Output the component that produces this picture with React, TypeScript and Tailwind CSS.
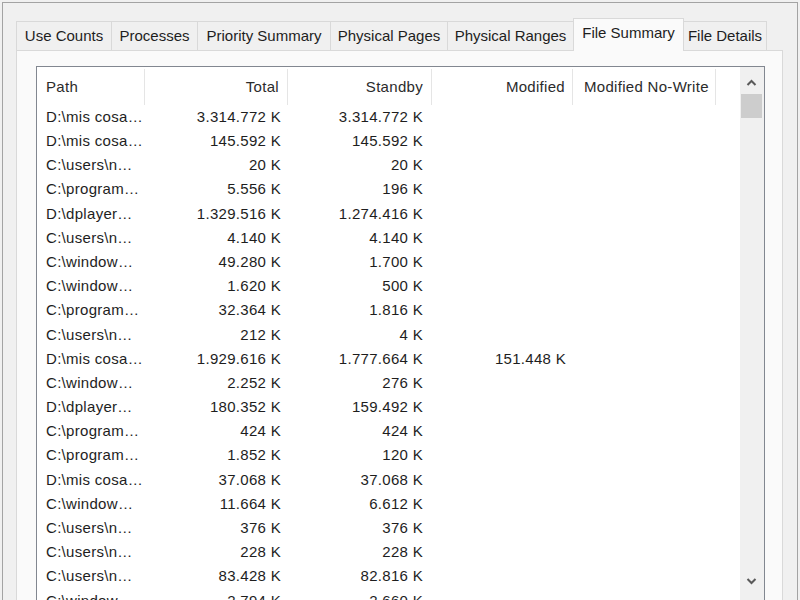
import React from 'react';

const tabs = [
  { label: 'Use Counts', w: 95 },
  { label: 'Processes', w: 86 },
  { label: 'Priority Summary', w: 133 },
  { label: 'Physical Pages', w: 117 },
  { label: 'Physical Ranges', w: 126 },
  { label: 'File Summary', w: 111, active: true },
  { label: 'File Details', w: 83 },
];

const rows: [string, string, string, string?][] = [
  ['D:\\mis cosa…', '3.314.772 K', '3.314.772 K'],
  ['D:\\mis cosa…', '145.592 K', '145.592 K'],
  ['C:\\users\\n…', '20 K', '20 K'],
  ['C:\\program…', '5.556 K', '196 K'],
  ['D:\\dplayer…', '1.329.516 K', '1.274.416 K'],
  ['C:\\users\\n…', '4.140 K', '4.140 K'],
  ['C:\\window…', '49.280 K', '1.700 K'],
  ['C:\\window…', '1.620 K', '500 K'],
  ['C:\\program…', '32.364 K', '1.816 K'],
  ['C:\\users\\n…', '212 K', '4 K'],
  ['D:\\mis cosa…', '1.929.616 K', '1.777.664 K', '151.448 K'],
  ['C:\\window…', '2.252 K', '276 K'],
  ['D:\\dplayer…', '180.352 K', '159.492 K'],
  ['C:\\program…', '424 K', '424 K'],
  ['C:\\program…', '1.852 K', '120 K'],
  ['D:\\mis cosa…', '37.068 K', '37.068 K'],
  ['C:\\window…', '11.664 K', '6.612 K'],
  ['C:\\users\\n…', '376 K', '376 K'],
  ['C:\\users\\n…', '228 K', '228 K'],
  ['C:\\users\\n…', '83.428 K', '82.816 K'],
  ['C:\\window…', '2.794 K', '2.660 K'],
];

function Chevron({ up }: { up?: boolean }) {
  return (
    <svg width="11" height="7" viewBox="0 0 11 7">
      <path
        d={up ? 'M1.5 6 L5.5 2 L9.5 6' : 'M1.5 1 L5.5 5 L9.5 1'}
        fill="none"
        stroke="#5a5a5a"
        strokeWidth="2"
      />
    </svg>
  );
}

export default function App() {
  return (
    <div className="w-[800px] h-[600px] overflow-hidden bg-[#f0f0f0] font-['Liberation_Sans',Arial,sans-serif] text-[15px] text-[#1e1e1e]">
      <div className="mt-[2px] mx-[2px] h-[598px] border-t border-l border-r border-[#a3a3a3] flex flex-col">
        {/* tabs */}
        <div className="flex items-end h-[47px] pl-[13px] relative z-10">
          {tabs.map((t, i) =>
            t.active ? (
              <div
                key={t.label}
                style={{ width: t.w }}
                className="h-[33px] -mb-px bg-[#fafafa] border border-b-0 border-[#d9d9d9] flex items-center justify-center pb-[3px] whitespace-nowrap"
              >
                {t.label}
              </div>
            ) : (
              <div
                key={t.label}
                style={{ width: t.w }}
                className={`h-[29px] bg-[#f0f0f0] border-t border-[#d9d9d9] flex items-center justify-center pt-[1px] whitespace-nowrap ${
                  i === tabs.length - 1 ? 'border-r' : ''
                } ${tabs[i - 1]?.active ? '' : 'border-l'}`}
              >
                {t.label}
              </div>
            )
          )}
        </div>

        {/* panel */}
        <div className="ml-[13px] w-[767px] flex-1 min-h-0 bg-[#fafafa] border border-b-0 border-[#d9d9d9] pt-[15px] pl-[19px] flex flex-col">
          <div className="w-[729px] flex-1 min-h-0 bg-white border border-b-0 border-[#828790] flex overflow-hidden">
            <div className="w-[703px] flex flex-col">
              <div className="flex h-[38px] shrink-0 text-[#2b2b2b] tracking-[0.3px] pt-[2px]">
                <div className="w-[108px] pl-[9px] flex items-center border-r border-[#e5e5e5]">Path</div>
                <div className="w-[143px] pr-[8px] flex items-center justify-end border-r border-[#e5e5e5]">Total</div>
                <div className="w-[144px] pr-[8px] flex items-center justify-end border-r border-[#e5e5e5]">Standby</div>
                <div className="w-[141px] pr-[7px] flex items-center justify-end border-r border-[#e5e5e5]">Modified</div>
                <div className="w-[143px] pl-[11px] flex items-center border-r border-[#e5e5e5] whitespace-nowrap">Modified No-Write</div>
              </div>
              {rows.map((r, i) => (
                <div key={i} className="flex h-[24.2px] shrink-0 items-center tracking-[0.3px]">
                  <div className="w-[108px] pl-[9px] whitespace-nowrap overflow-hidden">{r[0]}</div>
                  <div className="w-[143px] pr-[7px] text-right whitespace-nowrap">{r[1]}</div>
                  <div className="w-[144px] pr-[9px] text-right whitespace-nowrap">{r[2]}</div>
                  <div className="w-[141px] pr-[7px] text-right whitespace-nowrap">{r[3] ?? ''}</div>
                </div>
              ))}
            </div>
            {/* scrollbar */}
            <div className="w-[24px] bg-[#f0f0f0] flex flex-col items-center pr-[2px]">
              <div className="h-[27px] flex items-center justify-center pt-[3px]">
                <Chevron up />
              </div>
              <div className="w-[21px] h-[24px] bg-[#cdcdcd]" />
              <div className="flex-1" />
              <div className="h-[22px] flex items-start justify-center">
                <Chevron />
              </div>
            </div>
          </div>
        </div>
      </div>
    </div>
  );
}
